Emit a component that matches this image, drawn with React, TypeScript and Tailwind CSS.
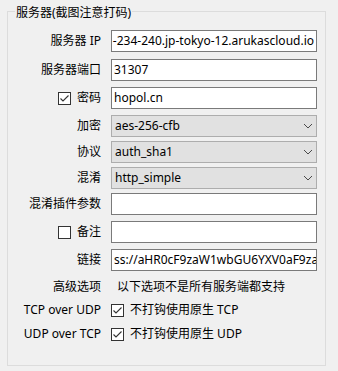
import type { ReactNode } from "react";

const font = "font-['Noto_Sans','Noto_Sans_CJK_SC',sans-serif]";

function Check({ checked }: { checked: boolean }) {
  return (
    <span className="flex h-[13px] w-[13px] shrink-0 items-center justify-center border border-[#333333] bg-white">
      {checked && (
        <svg width="11" height="11" viewBox="0 0 11 11">
          <polyline points="1.5,5.5 4,8 9.5,2.5" fill="none" stroke="#333333" strokeWidth="1.1" />
        </svg>
      )}
    </span>
  );
}

function Row({ h, label, children }: { h: string; label: ReactNode; children: ReactNode }) {
  return (
    <div className={`flex items-start ${h}`}>
      <div className="flex h-[22px] w-[93px] items-center justify-end text-[12px] leading-[16px] text-black">
        {label}
      </div>
      <div className="ml-[10px] w-[206px]">{children}</div>
    </div>
  );
}

function TextBox({ value, tail }: { value: string; tail?: boolean }) {
  return (
    <div
      className={`flex h-[22px] items-center overflow-hidden whitespace-nowrap border border-[#7a7a7a] bg-white px-[2px] text-[12px] leading-[16px] text-black ${
        tail ? "justify-end" : "justify-start"
      }`}
    >
      <span className="shrink-0">{value}</span>
    </div>
  );
}

function Select({ value }: { value: string }) {
  return (
    <div className="flex h-[22px] items-center justify-between border border-[#adadad] bg-[#e1e1e1] pl-[3px] pr-[3px] text-[12px] leading-[16px] text-black">
      <span>{value}</span>
      <svg width="10" height="6" viewBox="0 0 10 6">
        <polyline points="1,1 5,5 9,1" fill="none" stroke="#4a4a4a" strokeWidth="1" />
      </svg>
    </div>
  );
}

export default function App() {
  return (
    <div className={`h-[371px] w-[338px] overflow-hidden bg-[#f0f0f0] pt-[11px] pl-[7px] ${font}`}>
      <div className="relative h-[355px] w-[319px] border border-[#dcdcdc]">
        <span className="absolute left-[7px] top-[-7px] bg-[#f0f0f0] px-[1px] text-[12px] leading-[16px] text-black">
          服务器(截图注意打码)
        </span>

        <div className="flex flex-col pt-[18px]">
          <Row h="h-[29px]" label="服务器 IP">
            <TextBox value="ssr-151-234-240.jp-tokyo-12.arukascloud.io" tail />
          </Row>
          <Row h="h-[28px]" label="服务器端口">
            <TextBox value="31307" />
          </Row>
          <Row
            h="h-[28px]"
            label={
              <span className="flex items-center gap-[6px]">
                <Check checked />
                密码
              </span>
            }
          >
            <TextBox value="hopol.cn" />
          </Row>
          <Row h="h-[26px]" label="加密">
            <Select value="aes-256-cfb" />
          </Row>
          <Row h="h-[26px]" label="协议">
            <Select value="auth_sha1" />
          </Row>
          <Row h="h-[26px]" label="混淆">
            <Select value="http_simple" />
          </Row>
          <Row h="h-[28px]" label="混淆插件参数">
            <TextBox value="" />
          </Row>
          <Row
            h="h-[28px]"
            label={
              <span className="flex items-center gap-[6px]">
                <Check checked={false} />
                备注
              </span>
            }
          >
            <TextBox value="" />
          </Row>
          <Row h="h-[30px]" label="链接">
            <TextBox value="ss://aHR0cF9zaW1wbGU6YXV0aF9zaGExOmFlcy0yNTYtY2Zi" />
          </Row>

          <div className="flex h-[23px] items-start text-[12px] leading-[16px] text-black">
            <div className="w-[93px] text-right">高级选项</div>
            <div className="ml-[16px]">以下选项不是所有服务端都支持</div>
          </div>
          <div className="flex h-[24px] items-start text-[12px] leading-[16px] text-black">
            <div className="w-[93px] text-right">TCP over UDP</div>
            <div className="ml-[10px] flex items-center gap-[6px]">
              <Check checked />
              <span>不打钩使用原生 TCP</span>
            </div>
          </div>
          <div className="flex h-[16px] items-start text-[12px] leading-[16px] text-black">
            <div className="w-[93px] text-right">UDP over TCP</div>
            <div className="ml-[10px] flex items-center gap-[6px]">
              <Check checked />
              <span>不打钩使用原生 UDP</span>
            </div>
          </div>
        </div>
      </div>
    </div>
  );
}
